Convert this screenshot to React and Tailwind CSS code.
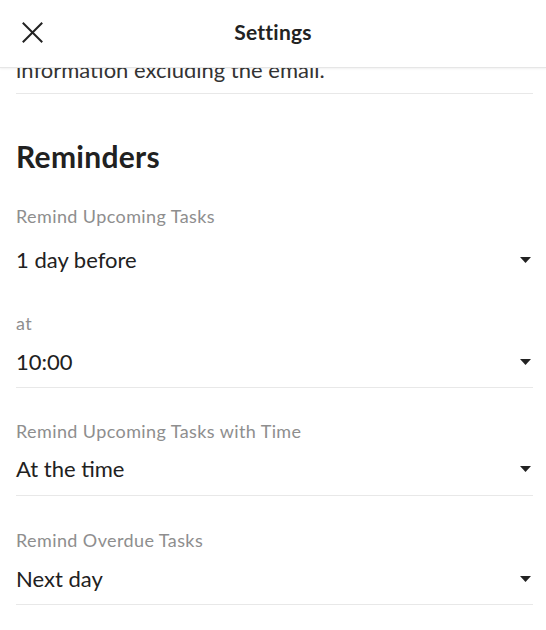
import React from 'react'

const Caret = () => (
  <svg width="11" height="6" viewBox="0 0 11 6" className="mr-[2px] shrink-0">
    <polygon points="0,0 11,0 5.5,6" fill="#222" />
  </svg>
)

const Field = ({ label, value, className = '', valueGap = 'mt-[13px]', divider = true, pad = 'pb-[11px]' }) => (
  <div className={`${className} ${divider ? `border-b border-[#e8e8e8] ${pad}` : ''}`}>
    <div className="text-[18px] leading-[24px] tracking-[0.4px] text-[#8e8e8e]">{label}</div>
    <div className={`${valueGap} flex items-center justify-between h-[28px]`}>
      <span className="text-[22px] leading-[28px] text-[#212121]">{value}</span>
      <Caret />
    </div>
  </div>
)

export default function App() {
  return (
    <div className="h-[630px] w-full overflow-hidden bg-white font-['Lato',sans-serif]">
      <header className="h-[68px] grid grid-cols-[1fr_auto_1fr] items-center border-b border-[#e6e6e6] shadow-[0_1px_2px_rgba(0,0,0,0.06)] bg-white">
        <button className="justify-self-start ml-[22px] mb-[2px] p-0">
          <svg width="21" height="21" viewBox="0 0 21 21">
            <path d="M1.5 1.5 L19.5 19.5 M19.5 1.5 L1.5 19.5" stroke="#222" strokeWidth="2" strokeLinecap="square" fill="none" />
          </svg>
        </button>
        <h1 className="mb-[4px] text-[21px] leading-[28px] tracking-[0.2px] font-bold text-[#222]">Settings</h1>
        <div />
      </header>

      <div className="pl-4 pr-[13px]">
        <div className="h-[26px] overflow-hidden border-b border-[#e8e8e8]">
          <p className="-mt-[12px] text-[22px] leading-[28px] text-[#333]">information excluding the email.</p>
        </div>

        <h2 className="mt-[44px] text-[30px] leading-[36px] tracking-[0.3px] font-bold text-[#212121]">Reminders</h2>

        <Field className="mt-[30px]" label="Remind Upcoming Tasks" value="1 day before" valueGap="mt-[18px]" divider={false} />
        <Field className="mt-[37px]" label="at" value="10:00" />
        <Field className="pt-[31px]" label="Remind Upcoming Tasks with Time" value="At the time" valueGap="mt-[12px]" pad="pb-[12px]" />
        <Field className="pt-[32px]" label="Remind Overdue Tasks" value="Next day" />
      </div>
    </div>
  )
}
